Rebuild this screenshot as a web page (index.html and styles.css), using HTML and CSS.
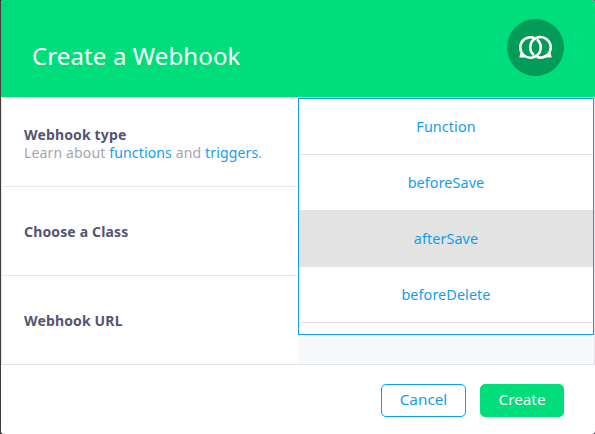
FILE: index.html
```html
<!DOCTYPE html>
<html lang="en">
<head>
<meta charset="utf-8">
<title>Create a Webhook</title>
<link rel="stylesheet" href="styles.css">
</head>
<body>
<div class="modal">
  <header class="header">
    <h1 class="title">Create a Webhook</h1>
    <div class="badge">
      <svg width="35" height="25" viewBox="0 0 35 25" fill="none" stroke="#fff" stroke-width="2.6">
        <path d="M16.3 3A10.2 10.2 0 1 0 19 4.6"/>
        <path d="M18.7 21.8A10.2 10.2 0 1 0 16 20.2"/>
        <path d="M2.4 18L1.3 22.6H7.5L6 19.6ZM32.6 18L33.7 22.6H27.5L29 19.6Z" fill="#fff" stroke="none"/>
      </svg>
    </div>
  </header>
  <main class="body">
    <div class="labels">
      <section class="field">
        <div class="label">Webhook type</div>
        <div class="hint">Learn about <a>functions</a> and <a>triggers</a>.</div>
      </section>
      <section class="field"><div class="label">Choose a Class</div></section>
      <section class="field"><div class="label">Webhook URL</div></section>
    </div>
    <div class="inputs">
      <ul class="menu">
        <li>Function</li>
        <li>beforeSave</li>
        <li class="hover">afterSave</li>
        <li>beforeDelete</li>
      </ul>
    </div>
  </main>
  <footer class="footer">
    <button class="button">Cancel</button>
    <button class="button primary">Create</button>
  </footer>
</div>
</body>
</html>
```

FILE: styles.css
```css
* { box-sizing: border-box; }
body {
  margin: 0;
  padding-left: 1px;
  height: 434px;
  overflow: hidden;
  background: #403c42;
  font-family: "Noto Sans", "Open Sans", sans-serif;
}
.modal {
  height: 434px;
  display: flex;
  flex-direction: column;
  background: #fff;
  border-radius: 3px;
  overflow: hidden;
}
.header {
  height: 97px;
  flex: none;
  display: flex;
  justify-content: space-between;
  padding: 19px 31px 0;
  background: #00de7c;
}
.title {
  margin: 20px 0 0;
  font-size: 24px;
  line-height: 34px;
  font-weight: 400;
  letter-spacing: 0.12px;
  color: #fff;
}
.badge {
  width: 57px;
  height: 57px;
  border-radius: 50%;
  background: #029b57;
  display: flex;
  align-items: center;
  justify-content: center;
}
.body {
  height: 268px;
  flex: none;
  display: flex;
  border: 1px solid #e4e4e8;
}
.labels { width: 296px; }
.field {
  height: 89px;
  padding-left: 22px;
  display: flex;
  flex-direction: column;
  justify-content: center;
  font-size: 14px;
  line-height: 18px;
  letter-spacing: 0.15px;
  border-bottom: 1px solid #e8e8ea;
}
.field:first-child { padding-top: 3px; }
.field:nth-child(2) { padding-top: 1px; }
.field:last-child { border-bottom: 0; }
.label { font-weight: 700; color: #555472; }
.hint { color: #a5a4b1; }
.hint a { color: #169cee; }
.inputs { flex: 1; background: #f6fafb; }
.menu {
  height: 237px;
  width: 296px;
  margin: 0;
  padding: 0;
  list-style: none;
  background: #fff;
  border: 1px solid #169cee;
}
.menu li {
  height: 56px;
  border-bottom: 1px solid #e3e3e3;
  text-align: center;
  font-size: 14.4px;
  line-height: 56px;
  letter-spacing: 0.08px;
  color: #169cee;
}
.menu .hover { background: #e3e3e3; }
.footer {
  flex: 1;
  display: flex;
  justify-content: flex-end;
  gap: 14px;
  padding: 19px 31px 0;
}
.button {
  width: 85px;
  height: 33px;
  padding: 0 0 4px;
  border: 1px solid #169cee;
  border-radius: 5px;
  background: #fff;
  color: #169cee;
  font: 400 15.3px/20px "Noto Sans", sans-serif;
}
.primary { width: 84px; background: #00de7c; border-color: #00de7c; color: #fff; }
```
